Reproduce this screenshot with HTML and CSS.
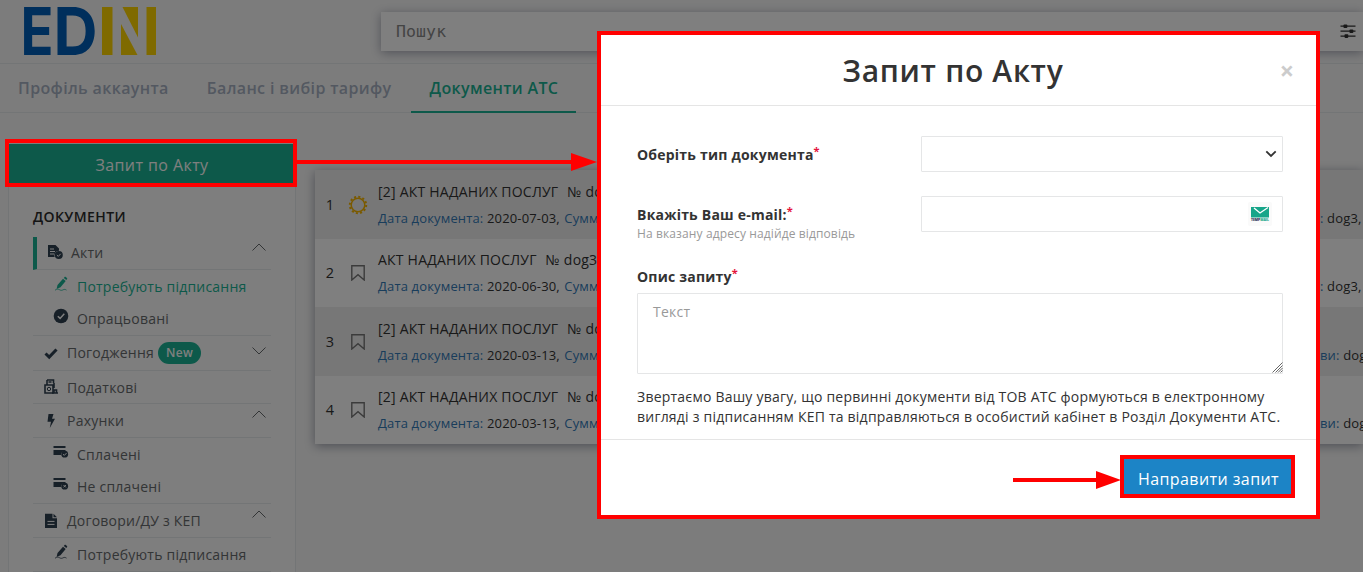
FILE: index.html
```html
<!DOCTYPE html>
<html lang="uk">
<head>
  <meta charset="UTF-8" />
  <meta name="viewport" content="width=device-width, initial-scale=1.0" />
  <title>EDIN</title>
  <link rel="stylesheet" href="styles.css">
</head>
<body>
  <!-- Shared icons -->
  <svg class="sprite" width="0" height="0">
    <symbol id="i-up" viewBox="0 0 16 10"><path d="M1.5 8.5 8 2l6.500 6.500" fill="none" stroke="currentColor" stroke-width="1"/></symbol>
    <symbol id="i-down" viewBox="0 0 16 10"><path d="M1.500 1.500 8 8l6.500-6.500" fill="none" stroke="currentColor" stroke-width="1"/></symbol>
    <symbol id="i-pen" viewBox="0 0 14 16"><path d="M9 2.800l2.700 2.100-5.200 6.300-3.900 1.700.9-4zM9.800 1.900l.8-1c.3-.3.6-.3.9-.1l1.500 1.200c.3.300.3.600.1.900l-.8 1z" fill="currentColor"/><path d="M1 14.200c2-1.400 3.400-1.200 4.700-.4s2.300.6 3.400 0 2.200-.5 3.400.3" fill="none" stroke="currentColor" stroke-width=".8"/></symbol>
    <symbol id="i-card" viewBox="0 0 16 14"><path d="M.5 1h12v2H.5zM.5 5h12v1a4 4 0 0 0-4.600 4H.5z" fill="currentColor"/><circle cx="11.700" cy="9.200" r="3.400" fill="currentColor"/></symbol>
    <symbol id="i-mark" viewBox="0 0 14 16"><path d="M.8.700h12.400v14.300L7 9.600.8 15z" fill="none" stroke="currentColor" stroke-width="1.400"/></symbol>
  </svg>

  <div class="page">
    <header class="header">
      <svg class="logo" width="134" height="50" viewBox="0 0 134 50" role="img" aria-label="EDIN">
        <text x="-3.500" y="49" class="logo-text" textLength="33" lengthAdjust="spacingAndGlyphs">E</text>
        <text x="29.500" y="49" class="logo-text" textLength="44" lengthAdjust="spacingAndGlyphs">D</text>
        <g fill="#ffd400">
          <rect x="78" y="1" width="10.500" height="48"/>
          <path d="M97 18v31h16.500z"/>
          <path d="M98.500 1H114v30.500z"/>
          <rect x="122.500" y="1" width="9.500" height="48"/>
        </g>
      </svg>
      <div class="search">
        <span>Пошук</span>
        <svg width="16" height="16" viewBox="0 0 16 16" fill="currentColor"><path d="M.5 1.500h15v1.300H.5zM.5 6.500h15v1.300H.5zM.5 11.500h15v1.300H.5z"/><rect x="3.500" y=".4" width="3.800" height="3.600" rx=".8"/><rect x="9.500" y="5.400" width="3.800" height="3.600" rx=".8"/><rect x="4.500" y="10.300" width="3.800" height="3.600" rx=".8"/></svg>
      </div>
    </header>

    <nav class="tabs">
      <a class="tab">Профіль аккаунта</a>
      <a class="tab">Баланс і вибір тарифу</a>
      <a class="tab active">Документи АТС</a>
      <a class="tab">Ком</a>
    </nav>

    <div class="content">
      <aside class="sidebar">
        <button class="request-btn">Запит по Акту</button>
        <div class="menu">
          <h5>ДОКУМЕНТИ</h5>

          <div class="group current">
            <svg width="16" height="16" viewBox="0 0 16 16"><path d="M1 1h7.500L12 4.500v2.300a4.500 4.500 0 0 0-4.300 6.200H1z" fill="currentColor"/><path d="M3 5h4M3 7.500h5M3 10h4" stroke="#fff"/><circle cx="11.800" cy="11" r="4" fill="currentColor"/><path d="M9.900 11l1.400 1.400 2.400-2.600" fill="none" stroke="#fff"/></svg>
            <span>Акти</span>
            <svg class="arrow" width="16" height="10"><use href="#i-up"/></svg>
          </div>
          <div class="subs">
            <div class="sub selected"><svg width="14" height="16"><use href="#i-pen"/></svg><span>Потребують підписання</span></div>
            <div class="sub"><svg width="16" height="16" viewBox="0 0 16 16"><circle cx="8" cy="8" r="7.300" fill="currentColor"/><path d="M4.800 8.200l2.300 2.200 4.200-4.600" fill="none" stroke="#fff" stroke-width="1.500"/></svg><span>Опрацьовані</span></div>
          </div>

          <div class="group tall">
            <svg width="14" height="14" viewBox="0 0 14 14"><path d="M1.500 7.500l3.700 3.600L12.500 3.500" fill="none" stroke="currentColor" stroke-width="3"/></svg>
            <span>Погодження</span><b class="badge">New</b>
            <svg class="arrow" width="16" height="10"><use href="#i-down"/></svg>
          </div>
          <div class="group short">
            <svg width="14" height="16" viewBox="0 0 14 16"><path d="M3 1h6.500v3M3 1v5M4.500 3h3M10 4v5M1 6h8v8H1z" fill="none" stroke="currentColor" stroke-width="1.600"/><circle cx="5" cy="10" r="1.700" fill="none" stroke="currentColor"/><path d="M8 14h6M10 14v-3h2.500v3" fill="none" stroke="currentColor" stroke-width="1.600"/></svg>
            <span>Податкові</span>
          </div>
          <div class="group">
            <svg width="14" height="16" viewBox="0 0 14 16"><path d="M4.500 1h5L8 5.800h3L5.800 15 7 8.800H3.500z" fill="currentColor"/></svg>
            <span>Рахунки</span>
            <svg class="arrow" width="16" height="10"><use href="#i-up"/></svg>
          </div>
          <div class="subs">
            <div class="sub"><svg width="16" height="14"><use href="#i-card"/><path d="M10 9.200l1.300 1.200 2.200-2.300" fill="none" stroke="#fff"/></svg><span>Сплачені</span></div>
            <div class="sub"><svg width="16" height="14"><use href="#i-card"/><path d="M10.500 8l2.400 2.400M12.900 8l-2.400 2.400" fill="none" stroke="#fff"/></svg><span>Не сплачені</span></div>
          </div>

          <div class="group">
            <svg class="file" width="14" height="16" viewBox="0 0 14 16"><path d="M1 .8h7.500v4.400H13V15H1zM9.500.8L13 4.200H9.500z" fill="currentColor"/><path d="M3.500 8.400h7M3.500 11.400h7" stroke="#fff"/></svg>
            <span>Договори/ДУ з КЕП</span>
            <svg class="arrow" width="16" height="10"><use href="#i-up"/></svg>
          </div>
          <div class="subs">
            <div class="sub"><svg width="14" height="16"><use href="#i-pen"/></svg><span>Потребують підписання</span></div>
          </div>
        </div>
      </aside>

      <main class="docs">
        <div class="doc">
          <span class="num">1</span>
          <svg class="sun" width="20" height="20" viewBox="0 0 20 20"><circle cx="10" cy="10" r="6.800" fill="none" stroke="currentColor" stroke-width="1.500"/><circle cx="10" cy="10" r="8.200" fill="none" stroke="currentColor" stroke-width="2" stroke-dasharray="2.150 2.143"/></svg>
          <div class="info">
            <p class="name">[2] АКТ НАДАНИХ ПОСЛУГ <span>№ dog3</span></p>
            <p class="meta"><i>Дата документа:</i> 2020-07-03, <i class="sum">Сумма</i></p>
          </div>
          <p class="meta tail"><i>:</i> dog3,</p>
        </div>
        <div class="doc">
          <span class="num">2</span>
          <svg class="mark" width="14" height="16"><use href="#i-mark"/></svg>
          <div class="info">
            <p class="name">АКТ НАДАНИХ ПОСЛУГ <span>№ dog3</span></p>
            <p class="meta"><i>Дата документа:</i> 2020-06-30, <i class="sum">Сумма</i></p>
          </div>
          <p class="meta tail"><i>:</i> dog3,</p>
        </div>
        <div class="doc">
          <span class="num">3</span>
          <svg class="mark" width="14" height="16"><use href="#i-mark"/></svg>
          <div class="info">
            <p class="name">[2] АКТ НАДАНИХ ПОСЛУГ <span>№ dog3</span></p>
            <p class="meta"><i>Дата документа:</i> 2020-03-13, <i class="sum">Сумма</i></p>
          </div>
          <p class="meta tail"><i>ви:</i> dog</p>
        </div>
        <div class="doc">
          <span class="num">4</span>
          <svg class="mark" width="14" height="16"><use href="#i-mark"/></svg>
          <div class="info">
            <p class="name">[2] АКТ НАДАНИХ ПОСЛУГ <span>№ dog3</span></p>
            <p class="meta"><i>Дата документа:</i> 2020-03-13, <i class="sum">Сумма</i></p>
          </div>
          <p class="meta tail"><i>ви:</i> dog</p>
        </div>
      </main>
    </div>
  </div>

  <div class="backdrop"></div>

  <div class="modal">
    <div class="modal-header">
      <h2>Запит по Акту</h2>
      <button class="close">×</button>
    </div>
    <div class="modal-body">
      <div class="field">
        <label>Оберіть тип документа<sup>*</sup></label>
        <div class="control select">
          <svg width="12" height="8" viewBox="0 0 12 8"><path d="M1.300 1.300L6 6l4.700-4.700" fill="none" stroke="#333" stroke-width="1.800"/></svg>
        </div>
      </div>
      <div class="field">
        <label>Вкажіть Ваш e-mail:<sup>*</sup><small>На вказану адресу надійде відповідь</small></label>
        <div class="control email">
          <svg width="24" height="24" viewBox="0 0 24 24"><rect width="24" height="24" rx="2" fill="#fafafa"/><rect x="3" y="5" width="18" height="10.500" fill="#17a589"/><path d="M6 6l6 5L20 5.500" fill="none" stroke="#fff" stroke-width="1.300"/><text x="3" y="19" class="tm" textLength="18" lengthAdjust="spacingAndGlyphs"><tspan fill="#1d2b4a">TEMP</tspan><tspan fill="#17a589">MAIL</tspan></text></svg>
        </div>
      </div>
      <label class="desc">Опис запиту<sup>*</sup></label>
      <div class="textarea-wrap">
        <textarea placeholder="Текст"></textarea>
        <svg class="grip" width="11" height="11" viewBox="0 0 11 11"><path d="M.5 10.500l10-10M3.500 10.500l7-7M6 10.500l4.500-4.500M8.500 10.500l2-2" stroke="#666" stroke-width="1"/></svg>
      </div>
      <p class="note">Звертаємо Вашу увагу, що первинні документи від ТОВ АТС формуються в електронному вигляді з підписанням КЕП та відправляються в особистий кабінет в Розділ Документи АТС.</p>
    </div>
    <div class="modal-footer">
      <button class="send">Направити запит</button>
    </div>
  </div>

  <!-- Red callouts -->
  <div class="callout callout-request"></div>
  <svg class="callout-arrow to-modal" width="300" height="18" viewBox="0 0 300 18"><path d="M0 7h274V0l26 9-26 9v-7H0z"/></svg>
  <svg class="callout-arrow to-send" width="108" height="18" viewBox="0 0 108 18"><path d="M0 7h83V0l25 9-25 9v-7H0z"/></svg>
</body>
</html>
```

FILE: styles.css
```css
* {
  box-sizing: border-box;
}
html, body {
  height: 100%;
  margin: 0;
  overflow: hidden;
}
body {
  position: relative;
  font-family: "Open Sans", "Noto Sans", sans-serif;
  font-size: 14px;
  letter-spacing: 0.22px;
  color: #676a6c;
}
p, h2, h5 {
  margin: 0;
}
button {
  border: none;
  padding: 0;
  font-family: inherit;
  letter-spacing: 0.42px;
}
.sprite {
  position: absolute;
}
.page {
  height: 572px;
  background: #f9f9f9;
  overflow: hidden;
}

/* Header */
.header {
  display: flex;
  height: 64px;
  padding: 6px 0 0 24px;
  border-bottom: 1px solid #e7eaec;
}
.logo {
  flex: none;
  margin-right: 223px;
  overflow: visible;
}
.logo-text {
  font-family: Inter, sans-serif;
  font-size: 66px;
  font-weight: 700;
  letter-spacing: 0;
  fill: #005eb8;
}
.search {
  flex: 1;
  display: flex;
  align-items: center;
  justify-content: space-between;
  height: 39px;
  margin-top: 6px;
  padding: 0 7px 0 15px;
  background: #fff;
  box-shadow: 0 2px 10px rgba(60, 65, 90, 0.45);
  font-family: "DejaVu Sans Mono", monospace;
  font-size: 16.5px;
  letter-spacing: 0.1px;
  color: #888;
}
.search svg {
  color: #333;
}

/* Tabs */
.tabs {
  display: flex;
  gap: 2px;
  height: 49px;
  border-bottom: 1px solid #e7eaec;
}
.tab {
  height: 49px;
  padding: 0 18px;
  line-height: 49px;
  font-size: 16px;
  font-weight: 600;
  letter-spacing: 0.36px;
  color: #a7b1c2;
  white-space: nowrap;
}
.tab.active {
  color: #1ab394;
  border-bottom: 2px solid #1ab394;
}

/* Sidebar */
.content {
  display: flex;
  align-items: flex-start;
  padding: 31px 0 0 8px;
}
.sidebar {
  flex: none;
  width: 288px;
  height: 440px;
  margin-right: 19px;
  border: 1px solid #e7eaec;
  border-top: none;
  background: #fcfcfc;
}
.request-btn {
  display: block;
  width: 286px;
  height: 42px;
  background: #1ab394;
  color: #fff;
  font-size: 16px;
}
.menu {
  padding: 20px 24px 0;
}
.menu h5 {
  height: 31px;
  line-height: 21px;
  font-size: 14px;
  font-weight: 600;
  letter-spacing: 0.4px;
  color: #2b2b2b;
}
.group {
  display: flex;
  align-items: center;
  height: 34px;
  padding-left: 11px;
  border-bottom: 1px solid #e7eaec;
}
.group svg, .sub svg {
  flex: none;
  color: #2f4050;
}
.group > span {
  margin-left: 9px;
}
.group.current {
  height: 33px;
  border-left: 4px solid #1ab394;
  padding-left: 10px;
}
.group.current > svg:first-child {
  margin-top: -3px;
}
.group.current > span {
  margin: -2px 0 0 8px;
}
.group.tall {
  height: 35px;
}
.group.tall > span {
  margin-top: -1px;
}
.group.short {
  height: 33px;
}
.group .arrow {
  margin: -13px 4px 0 auto;
  color: #676a6c;
}
.group.tall .arrow {
  margin-top: -4px;
}
.badge {
  height: 22px;
  margin-left: 4px;
  padding: 0 8px;
  border-radius: 11px;
  background: #1ab394;
  color: #fff;
  font-size: 12px;
  font-weight: 600;
  letter-spacing: 0.4px;
  line-height: 21px;
}
.subs {
  padding: 0 0 1px 20px;
  border-bottom: 1px solid #e7eaec;
}
.sub {
  display: flex;
  align-items: center;
  height: 32px;
}
.sub svg {
  width: 16px;
  margin: -4px 8px 0 0;
}
.sub.selected, .sub.selected svg {
  color: #1ab394;
}

/* Documents list */
.docs {
  flex: 1;
  margin-top: 26px;
  background: #fff;
  box-shadow: 0 2px 10px rgba(60, 65, 90, 0.5);
  color: #333;
}
.doc {
  display: flex;
  align-items: center;
  height: 68.5px;
}
.doc:nth-child(odd) {
  background: #efefef;
}
.num {
  width: 30px;
  text-align: center;
  font-size: 14.5px;
}
.sun {
  margin: 2px 10px 0 3px;
  color: #f5b400;
}
.mark {
  margin: 1px 13px 0 6px;
  color: #777;
}
.info {
  width: 230px;
  margin-top: 1px;
  white-space: nowrap;
}
.name {
  height: 26px;
  line-height: 20px;
}
.name span {
  margin-left: 5px;
}
.meta {
  line-height: 20px;
  font-size: 13px;
  letter-spacing: 0.15px;
}
.meta i {
  font-style: normal;
  color: #337ab7;
}
.meta .sum {
  margin-left: 1px;
}
.tail {
  flex: none;
  width: 43px;
  margin: 27px 0 0 auto;
  white-space: nowrap;
}

/* Modal */
.backdrop {
  position: absolute;
  inset: 0;
  background: rgba(0, 0, 0, 0.5);
}
.modal {
  position: absolute;
  left: 597px;
  top: 31px;
  width: 723px;
  height: 488px;
  border: 4px solid #f00;
  background: #fff;
  color: #333;
}
.modal-header {
  display: flex;
  align-items: center;
  height: 71px;
  padding: 0 21px 0 26px;
  border-bottom: 1px solid #e5e5e5;
}
.modal-header h2 {
  flex: 1;
  text-align: center;
  font-size: 30px;
  font-weight: 600;
  letter-spacing: 0.68px;
}
.close {
  width: 16px;
  background: none;
  font-size: 25px;
  font-weight: 700;
  letter-spacing: 0;
  color: #ccc;
}
.modal-body {
  height: 334px;
  padding: 30px 33px 0 36px;
  border-bottom: 1px solid #e5e5e5;
}
.field {
  display: flex;
  justify-content: space-between;
  height: 60px;
}
label {
  padding-top: 9px;
  line-height: 20px;
  font-weight: 700;
}
label small {
  display: block;
  line-height: 18px;
  font-size: 12px;
  font-weight: 400;
  letter-spacing: 0.12px;
  color: #999;
}
sup {
  position: relative;
  top: -5px;
  font-size: 11px;
  line-height: 0;
  vertical-align: baseline;
  color: #e4143c;
}
.control {
  display: flex;
  align-items: center;
  justify-content: flex-end;
  width: 362px;
  height: 36px;
  border: 1px solid #e5e6e7;
  border-radius: 1px;
}
.select {
  padding-right: 5px;
}
.email {
  padding-right: 10px;
}
.tm {
  font-size: 4px;
  font-weight: 800;
  letter-spacing: 0;
}
.desc {
  display: block;
  height: 37px;
  padding-top: 11px;
}
.textarea-wrap {
  position: relative;
}
textarea {
  display: block;
  width: 646px;
  height: 81px;
  padding: 8px 15px;
  border: 1px solid #e5e6e7;
  border-radius: 1px;
  font-family: inherit;
  font-size: 14px;
  letter-spacing: 0.22px;
  resize: none;
}
textarea::placeholder {
  color: #999;
}
.grip {
  position: absolute;
  right: 0;
  bottom: 1px;
}
.note {
  margin-top: 13px;
  line-height: 20px;
}
.modal-footer {
  display: flex;
  justify-content: flex-end;
  padding: 15px 21px 0 0;
}
.send {
  width: 175px;
  height: 43px;
  padding: 4px 0 0 2px;
  border: 4px solid #f00;
  background: #1c84c6;
  color: #fff;
  font-size: 16px;
}

/* Callouts */
.callout {
  position: absolute;
  border: 4px solid #f00;
}
.callout-request {
  left: 5px;
  top: 139px;
  width: 292px;
  height: 48px;
}
.callout-arrow {
  position: absolute;
  fill: #f00;
}
.to-modal {
  left: 297px;
  top: 153px;
}
.to-send {
  left: 1013px;
  top: 471px;
}
```
